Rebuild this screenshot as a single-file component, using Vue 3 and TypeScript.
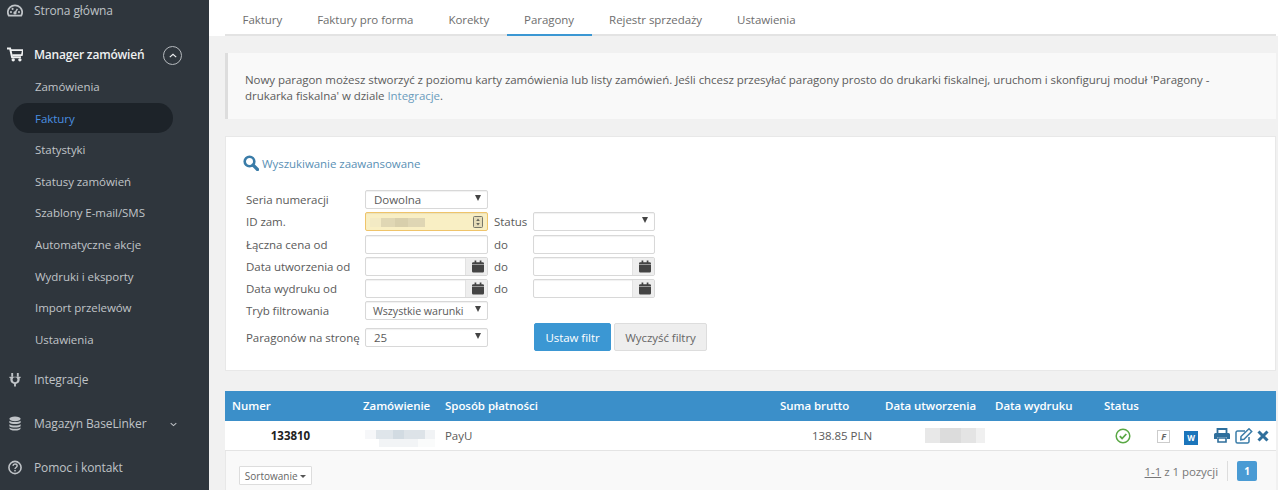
<script setup lang="ts">
const tabs = ['Faktury', 'Faktury pro forma', 'Korekty', 'Paragony', 'Rejestr sprzedaży', 'Ustawienia']
const subs = ['Zamówienia', 'Faktury', 'Statystyki', 'Statusy zamówień', 'Szablony E-mail/SMS', 'Automatyczne akcje', 'Wydruki i eksporty', 'Import przelewów', 'Ustawienia']
</script>

<template>
  <div class="page">
    <aside class="side">
      <div class="nav home">
        <svg class="ico" viewBox="0 0 20 16"><path d="M10 1.500C5 1.500 1 5.300 1 10c0 1.700.5 3.200 1.300 4.500h15.400C18.500 13.200 19 11.700 19 10c0-4.700-4-8.500-9-8.500z" fill="none" stroke="currentColor" stroke-width="2.200"/><circle cx="10" cy="11" r="2" fill="currentColor"/><path d="M10 11l3-5" stroke="currentColor" stroke-width="1.800"/><circle cx="5" cy="10" r="1.300" fill="currentColor"/><circle cx="7" cy="6" r="1.300" fill="currentColor"/><circle cx="15" cy="10" r="1.300" fill="currentColor"/></svg>
        <span>Strona główna</span>
      </div>
      <div class="nav mgr">
        <svg class="ico" viewBox="0 0 18 16"><path d="M0 1.200h3.500l2.200 9.800h10" fill="none" stroke="currentColor" stroke-width="2.200"/><path d="M4.500 3H18l-1.300 5.800H6" fill="none" stroke="currentColor" stroke-width="2"/><circle cx="7" cy="14" r="1.900" fill="currentColor"/><circle cx="14.500" cy="14" r="1.900" fill="currentColor"/></svg>
        <span>Manager zamówień</span>
        <span class="circ"><svg viewBox="0 0 10 6" width="8" height="5"><path d="M1 5l4-3.500L9 5" fill="none" stroke="currentColor" stroke-width="1.500"/></svg></span>
      </div>
      <ul class="subs">
        <li v-for="s in subs" :key="s" :class="{ on: s === 'Faktury' }">{{ s }}</li>
      </ul>
      <div class="nav integ">
        <svg class="ico" viewBox="0 0 16 16"><path d="M5 1v4M11 1v4" stroke="currentColor" stroke-width="2"/><path d="M2 5h12v1.500h-1V8a5 5 0 0 1-4 4.700V15.500H7v-2.800A5 5 0 0 1 3 8V6.500H2z" fill="currentColor"/><circle cx="8" cy="8.300" r="2.600" fill="#2f363d"/></svg>
        <span>Integracje</span>
      </div>
      <div class="nav mag">
        <svg class="ico" viewBox="0 0 14 16"><ellipse cx="7" cy="3" rx="6" ry="2.500" fill="currentColor"/><path d="M1 5c1.500 1.800 10.500 1.800 12 0v2.300c-1.500 1.800-10.500 1.800-12 0zM1 8.700c1.500 1.800 10.500 1.800 12 0V11c-1.500 1.800-10.500 1.800-12 0zM1 12.300c1.500 1.800 10.500 1.800 12 0V13c0 1.400-2.700 2.500-6 2.500S1 14.400 1 13z" fill="currentColor"/></svg>
        <span>Magazyn BaseLinker</span>
        <svg class="chev" viewBox="0 0 10 6" width="7" height="5"><path d="M1 1l4 3.500L9 1" fill="none" stroke="currentColor" stroke-width="1.500"/></svg>
      </div>
      <div class="nav help">
        <svg class="ico" viewBox="0 0 16 16"><circle cx="8" cy="8" r="6.500" fill="none" stroke="currentColor" stroke-width="1.700"/><path d="M5.800 6.300C5.900 5 6.800 4.300 8 4.300c1.300 0 2.300.8 2.300 1.900 0 1.800-2.300 1.700-2.300 3.400" fill="none" stroke="currentColor" stroke-width="1.500"/><rect x="7.200" y="10.600" width="1.600" height="1.600" fill="currentColor"/></svg>
        <span>Pomoc i kontakt</span>
      </div>
    </aside>

    <main class="main">
      <nav class="tabs">
        <a v-for="t in tabs" :key="t" class="tab" :class="{ active: t === 'Paragony' }">{{ t }}</a>
      </nav>

      <div class="notice">
        <div>Nowy paragon możesz stworzyć z poziomu karty zamówienia lub listy zamówień. Jeśli chcesz przesyłać paragony prosto do drukarki fiskalnej, uruchom i skonfiguruj moduł 'Paragony -</div>
        <div>drukarka fiskalna' w dziale <a>Integracje</a>.</div>
      </div>

      <section class="card">
        <div class="adv">
          <svg viewBox="0 0 16 16" width="16" height="16"><circle cx="6.500" cy="6.500" r="4.800" fill="none" stroke="#3a7ca8" stroke-width="2.600"/><path d="M10 10l4.500 4.500" stroke="#3a7ca8" stroke-width="3.200" stroke-linecap="round"/></svg>
          <span>Wyszukiwanie zaawansowane</span>
        </div>
        <div class="form">
          <label>Seria numeracji</label>
          <div class="sel">Dowolna<i class="arr"></i></div>
          <span></span><span></span>

          <label>ID zam.</label>
          <div class="inp auto"><b class="blur1"></b>
            <svg viewBox="0 0 10 12" width="10" height="12" class="key"><rect x=".5" y=".5" width="9" height="11" rx="1" fill="#e5dcb8" stroke="#77776a"/><path d="M5 2.500L3.200 5h3.600zM3.200 7h3.600L5 9.500z" fill="#66665a"/></svg>
          </div>
          <span class="lab2">Status</span>
          <div class="sel"><i class="arr"></i></div>

          <label>Łączna cena od</label>
          <div class="inp"></div>
          <span class="lab2">do</span>
          <div class="inp"></div>

          <label>Data utworzenia od</label>
          <div class="date"><div class="field"></div><div class="addon"><svg viewBox="0 0 14 14" width="12" height="13"><use href="#cal"/></svg></div></div>
          <span class="lab2">do</span>
          <div class="date"><div class="field"></div><div class="addon"><svg viewBox="0 0 14 14" width="12" height="13"><use href="#cal"/></svg></div></div>

          <label>Data wydruku od</label>
          <div class="date"><div class="field"></div><div class="addon"><svg viewBox="0 0 14 14" width="12" height="13"><use href="#cal"/></svg></div></div>
          <span class="lab2">do</span>
          <div class="date"><div class="field"></div><div class="addon"><svg viewBox="0 0 14 14" width="12" height="13"><use href="#cal"/></svg></div></div>

          <label>Tryb filtrowania</label>
          <div class="sel small">Wszystkie warunki<i class="arr"></i></div>
          <span></span><span></span>

          <label class="last">Paragonów na stronę</label>
          <div class="sel last">25<i class="arr"></i></div>
          <span></span>
          <div class="btns">
            <button class="primary">Ustaw filtr</button>
            <button class="ghost">Wyczyść filtry</button>
          </div>
        </div>
        <svg width="0" height="0" class="defs"><defs><g id="cal"><path d="M0 5h14v7.500a1.500 1.500 0 0 1-1.500 1.500h-11A1.500 1.500 0 0 1 0 12.500zM1.500 2H3V0h2v2h4V0h2v2h1.500A1.500 1.500 0 0 1 14 3.500V4.300H0v-.8A1.500 1.500 0 0 1 1.500 2z" fill="#444"/></g></defs></svg>
      </section>

      <section class="table">
        <div class="row head">
          <span>Numer</span><span>Zamówienie</span><span>Sposób płatności</span><span>Suma brutto</span><span>Data utworzenia</span><span>Data wydruku</span><span>Status</span>
        </div>
        <div class="row body">
          <span class="num">133810</span>
          <span class="blurcell"><b class="blur2"></b></span>
          <span>PayU</span>
          <span class="sum">138.85 PLN</span>
          <span class="blurcell"><b class="blur3"></b></span>
          <span></span>
          <div class="acts">
            <svg class="ok" viewBox="0 0 16 16" width="16" height="16"><circle cx="8" cy="8" r="6.800" fill="none" stroke="#5aa845" stroke-width="1.500"/><path d="M4.800 8.200l2.300 2.300 4.200-4.500" fill="none" stroke="#5aa845" stroke-width="1.800"/></svg>
            <span class="fbox">F</span>
            <span class="wbox">W</span>
            <svg class="print" viewBox="0 0 16 15" width="18" height="15"><path d="M3.500 5V1h9v4" fill="none" stroke="#2f6f9c" stroke-width="1.800"/><path d="M1.500 5h13A1.500 1.500 0 0 1 16 6.500V11h-3V9H3v2H0V6.500A1.500 1.500 0 0 1 1.500 5z" fill="#2f6f9c"/><path d="M4 10h8v4H4z" fill="none" stroke="#2f6f9c" stroke-width="1.600"/></svg>
            <svg class="edit" viewBox="0 0 18 16" width="18" height="16"><path d="M14 9v4.500a1.500 1.500 0 0 1-1.500 1.500h-10A1.500 1.500 0 0 1 1 13.500v-9A1.500 1.500 0 0 1 2.500 3H10" fill="none" stroke="#3a7ca8" stroke-width="1.500"/><path d="M6 8.500L14 .8l2.700 2.700L9 11.300l-3.200.5z" fill="none" stroke="#3a7ca8" stroke-width="1.500"/></svg>
            <svg class="x" viewBox="0 0 12 12" width="12" height="12"><path d="M1.500 1.500l9 9M10.500 1.500l-9 9" stroke="#2f6f9c" stroke-width="3"/></svg>
          </div>
        </div>
        <div class="foot">
          <button class="sort">Sortowanie <i></i></button>
          <div class="pager">
            <span><u>1-1</u> z 1 pozycji</span>
            <em></em>
            <strong>1</strong>
          </div>
        </div>
      </section>
    </main>
  </div>
</template>

<style>
html, body { margin: 0; height: 490px; overflow: hidden; background: #f1f1f1; }
</style>

<style scoped>
.page { display: flex; width: 1278px; height: 490px; overflow: hidden; font-family: "Open Sans", sans-serif; font-size: 11.5px; letter-spacing: -0.05px; color: #5a5a5a; }
.side { width: 209px; flex: none; background: #2f363d; color: #c5c9cd; height: 490px; }
.nav { display: flex; align-items: center; height: 20px; font-size: 12px; padding-left: 7px; color: #bfc3c7; letter-spacing: -0.1px; position: relative; }
.nav .ico { width: 16px; height: 15px; margin-right: 11px; flex: none; }
.mgr { margin-top: 24px; color: #eef0f1; font-weight: 600; letter-spacing: -0.2px; }
.circ { position: absolute; left: 163px; top: 2px; width: 19px; height: 19px; border: 1px solid #b5b9bd; border-radius: 50%; display: flex; align-items: center; justify-content: center; box-sizing: border-box; }
.subs { list-style: none; margin: 8px 0 0; padding: 0; font-size: 11.5px; color: #c0c4c8; }
.subs li { height: 31.6px; line-height: 30px; padding-left: 35px; width: 174px; box-sizing: border-box; }
.subs li.on { margin: -1px 0 2.600px 13px; width: 160px; padding-left: 22px; background: #1d2329; border-radius: 15px; color: #4a8fe0; height: 30px; line-height: 31px; }
.integ { margin-top: 13px; }
.mag { margin-top: 24px; }
.help { margin-top: 24px; }
.chev { position: absolute; left: 170px; top: 9px; }

.main { flex: 1; min-width: 0; padding-right: 2px; }
.tabs { display: flex; height: 36px; margin-right: -2px; padding-left: 16px; box-sizing: border-box; margin-bottom: 17px; background: linear-gradient(#e3e3e3, #e3e3e3) 16px 100% / calc(100% - 18px) 2px no-repeat #fff; }
.tab { padding: 0 17.500px; line-height: 39px; height: 36px; box-sizing: border-box; color: #6e6e6e; }
.tab.active { border-bottom: 2px solid #3b97d3; }
.notice { margin-left: 16px; height: 66px; box-sizing: border-box; background: #f9f9f9; border-left: 3px solid #ddd; padding: 19px 0 0 17px; line-height: 16px; color: #5c5c5c; white-space: nowrap; overflow: hidden; }
.notice a { color: #6a9cbd; }
.card { margin: 17px 0 20px 16px; height: 235px; box-sizing: border-box; background: #fff; border: 1px solid #e8e8e8; padding: 17px 0 0 17px; }
.adv { display: flex; align-items: center; gap: 3px; color: #5a90b5; height: 18px; margin-bottom: 18px; }
.form { display: grid; grid-template-columns: 119px 123px 45px 122px; grid-auto-rows: 19px; row-gap: 3.300px; margin-left: 3px; align-items: center; }
.form label { color: #5a5a5a; white-space: nowrap; }
.lab2 { padding-left: 6px; }
.sel, .inp { height: 19px; box-sizing: border-box; border: 1px solid #d8d8d8; border-radius: 2px; background: #fff; position: relative; padding-left: 8px; line-height: 18px; box-shadow: inset 0 1px 1px rgba(0, 0, 0, .06); }
.sel.small { font-size: 10.7px; padding-left: 7px; }
.arr { position: absolute; right: 6px; top: 4px; width: 0; height: 0; border-left: 3px solid transparent; border-right: 3px solid transparent; border-top: 6px solid #444; }
.auto { background: #f9efc4; border-color: #efc46a; padding-left: 0; }
.blur1 { position: absolute; left: 4px; top: 5px; width: 55px; height: 9px; background: linear-gradient(90deg, #f3eac4 0 20%, #e0d7b4 20% 45%, #d8cfac 45% 70%, #dfd6b4 70%); }
.key { position: absolute; right: 4px; top: 3px; }
.date { display: flex; height: 19px; box-sizing: border-box; border: 1px solid #d8d8d8; border-radius: 2px; background: #fff; box-shadow: inset 0 1px 1px rgba(0, 0, 0, .06); }
.field { flex: 1; }
.addon { width: 22px; box-sizing: border-box; padding-left: 2px; background: #eee; border-left: 1px solid #e2e2e2; display: flex; align-items: center; justify-content: center; }
.last { position: relative; top: 4px; }
.btns { display: flex; gap: 3px; width: 180px; margin-left: 1px; position: relative; top: 4px; }
.btns button { height: 28px; font: inherit; letter-spacing: -0.05px; border-radius: 2px; padding: 0; cursor: pointer; }
.primary { width: 77px; background: #3b97d3; color: #fff; border: 1px solid #3b97d3; }
.ghost { width: 93px; background: #eee; color: #666; border: 1px solid #ddd; }
.defs { position: absolute; }

.table { margin-left: 16px; }
.row { display: grid; grid-template-columns: 138px 82px 335px 105px 110px 109px 1fr; align-items: center; }
.head { height: 30px; box-sizing: border-box; padding-bottom: 2px; background: #3b8fc9; color: #fff; font-weight: 600; }
.head span:first-child { padding-left: 7px; }
.body { height: 29px; background: #fff; border-bottom: 1px solid #e4e4e4; color: #5a5a5a; }
.num { font-weight: 700; color: #222; text-align: right; padding-right: 53px; }
.sum { text-align: right; padding-right: 13px; margin-left: -90px; width: 195px; box-sizing: border-box; }
.blurcell { align-self: start; }
.blur2 { display: block; width: 70px; height: 17px; margin: 9px 0 0 2px; background: linear-gradient(90deg, #f6f7f9 0 15%, #dfe5ea 15% 40%, #d2dbe2 40% 55%, #dde3e8 55% 85%, #f1f3f5 85%) top / 100% 9px no-repeat, linear-gradient(90deg, #fff 0 20%, #f2f4f6 20% 75%, #fafbfb 75%) bottom / 100% 8px no-repeat; }
.blur3 { display: block; width: 60px; height: 15px; margin: 7px 0 0 40px; background: linear-gradient(90deg, #e8e8e8 0 25%, #dcdcdc 25% 60%, #e4e4e4 60% 85%, #f0f0f0 85%); }
.acts { position: relative; height: 29px; }
.acts > * { position: absolute; }
.ok { left: 11px; top: 7px; }
.fbox { left: 53px; top: 9px; width: 13px; height: 13px; box-sizing: border-box; border: 1px solid #ccc; font-size: 9px; line-height: 12px; text-align: center; font-weight: 700; font-style: italic; color: #666; }
.wbox { left: 80px; top: 10px; width: 14px; height: 14px; background: #1b75bb; color: #fff; font-size: 8px; line-height: 14px; text-align: center; font-weight: 700; }
.print { left: 109px; top: 7px; }
.edit { left: 131px; top: 7px; }
.x { left: 153px; top: 9px; }
.foot { height: 40px; background: #f9f9f9; border-left: 1px solid #e8e8e8; display: flex; justify-content: space-between; align-items: flex-start; padding: 15px 19px 0 13px; box-sizing: border-box; }
.sort { width: 73px; height: 19px; font: inherit; font-size: 10px; color: #666; background: #fff; border: 1px solid #ddd; border-radius: 1px; padding: 0; }
.sort i { display: inline-block; border-left: 3px solid transparent; border-right: 3px solid transparent; border-top: 3px solid #555; vertical-align: middle; }
.pager { display: flex; align-items: center; margin-top: -5px; color: #777; }
.pager em { width: 1px; height: 20px; background: #ddd; margin: 0 9px; }
.pager strong { width: 20px; height: 20px; background: #4a9bd4; color: #fff; border-radius: 2px; text-align: center; font-size: 10px; line-height: 20px; }
</style>
